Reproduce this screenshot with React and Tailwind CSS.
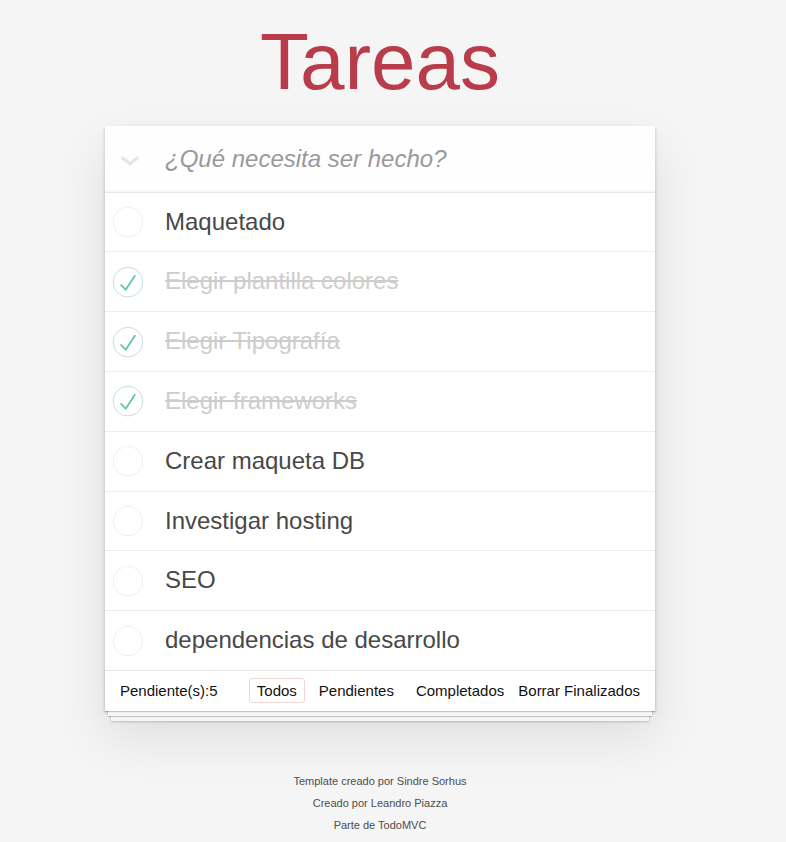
import { useState } from "react";

const initialTodos = [
  { id: 1, title: "Maquetado", done: false },
  { id: 2, title: "Elegir plantilla colores", done: true },
  { id: 3, title: "Elegir Tipografía", done: true },
  { id: 4, title: "Elegir frameworks", done: true },
  { id: 5, title: "Crear maqueta DB", done: false },
  { id: 6, title: "Investigar hosting", done: false },
  { id: 7, title: "SEO", done: false },
  { id: 8, title: "dependencias de desarrollo", done: false },
];

const filters = ["Todos", "Pendientes", "Completados"];

function TodoItem({ todo, onToggle }) {
  const inputId = `todo-${todo.id}`;
  return (
    <li className="flex items-center border-b border-[#ededed] last:border-b-0">
      <span className="grid h-10 w-10 shrink-0">
        <input
          id={inputId}
          type="checkbox"
          checked={todo.done}
          onChange={() => onToggle(todo.id)}
          className="col-start-1 row-start-1 h-10 w-10 cursor-pointer appearance-none"
        />
        <svg
          viewBox="-10 -18 100 135"
          aria-hidden="true"
          className="pointer-events-none col-start-1 row-start-1 h-10 w-10 overflow-visible"
        >
          <circle cx="50" cy="50" r="50" fill="none" strokeWidth="3" stroke={todo.done ? "#bddad5" : "#ededed"} />
          {todo.done && <path fill="#5dc2af" d="M72 25L42 71 27 56l-4 4 20 20 34-52z" />}
        </svg>
      </span>
      <label
        htmlFor={inputId}
        className={
          todo.done
            ? "flex-1 py-[15px] pr-4 pl-5 text-[24px] leading-[1.2] text-[#cdcdcd] line-through"
            : "flex-1 py-[15px] pr-4 pl-5 text-[24px] leading-[1.2] text-[#484848]"
        }
      >
        {todo.title}
      </label>
    </li>
  );
}

export default function App() {
  const [todos, setTodos] = useState(initialTodos);
  const [filter, setFilter] = useState("Todos");
  const [draft, setDraft] = useState("");

  const pending = todos.filter((t) => !t.done).length;
  const visible = todos.filter(
    (t) => filter === "Todos" || (filter === "Completados" ? t.done : !t.done)
  );

  const toggle = (id) => setTodos(todos.map((t) => (t.id === id ? { ...t, done: !t.done } : t)));
  const toggleAll = () => setTodos(todos.map((t) => ({ ...t, done: pending > 0 })));
  const addTodo = (e) => {
    e.preventDefault();
    if (!draft.trim()) return;
    setTodos([...todos, { id: Date.now(), title: draft.trim(), done: false }]);
    setDraft("");
  };

  return (
    <div className="min-h-screen bg-[#f5f5f5] pr-[26px] font-['Liberation_Sans',Arial,sans-serif] text-[#4d4d4d]">
      <div className="mx-auto max-w-[550px]">
        <h1 className="pt-4 pb-[18px] text-center text-[80px] leading-[92px] text-[#b83c4a]">Tareas</h1>

        <main className="bg-white shadow-[0_2px_4px_0_rgba(0,0,0,0.2),0_25px_50px_0_rgba(0,0,0,0.1)]">
          <form
            onSubmit={addTodo}
            className="flex items-center bg-[#fefefe] shadow-[inset_0_-2px_1px_rgba(0,0,0,0.03)]"
          >
            <button
              type="button"
              onClick={toggleAll}
              aria-label="Marcar todas"
              className="flex w-[50px] shrink-0 cursor-pointer justify-center pt-1"
            >
              <svg width="18" height="12" viewBox="0 0 18 12" aria-hidden="true">
                <path fill="#e6e6e6" d="M.5 1C3.500 2.200 6.500 4.200 9 6.800 11.500 4.200 14.500 2.200 17.500 1V4.800C14.300 6.400 11.500 8.600 9 11.500 6.500 8.600 3.700 6.400.5 4.800z" />
              </svg>
            </button>
            <input
              type="text"
              aria-label="Nueva tarea"
              placeholder="¿Qué necesita ser hecho?"
              value={draft}
              onChange={(e) => setDraft(e.target.value)}
              className="min-w-0 flex-1 bg-transparent py-4 pr-4 pl-[10px] text-[24px] leading-[1.4] outline-none placeholder:text-[#999] placeholder:italic"
            />
          </form>

          <ul className="border-t border-[#e6e6e6]">
            {visible.map((todo) => (
              <TodoItem key={todo.id} todo={todo} onToggle={toggle} />
            ))}
          </ul>

          <footer className="flex flex-wrap items-center gap-x-1.5 border-t border-[#e6e6e6] px-[15px] pt-[7px] pb-2 text-[15px] leading-[17px] text-[#111] shadow-[0_1px_1px_rgba(0,0,0,0.2),0_8px_0_-3px_#f6f6f6,0_9px_1px_-3px_rgba(0,0,0,0.2),0_16px_0_-6px_#f6f6f6,0_17px_2px_-6px_rgba(0,0,0,0.2)]">
            <span className="mr-auto">Pendiente(s):{pending}</span>
            <nav className="flex gap-1.5">
              {filters.map((name) => (
                <a
                  key={name}
                  href="#"
                  onClick={(e) => {
                    e.preventDefault();
                    setFilter(name);
                  }}
                  className={
                    filter === name
                      ? "rounded-[3px] border border-[#efd5d5] px-[7px] py-[3px]"
                      : "rounded-[3px] border border-transparent px-[7px] py-[3px]"
                  }
                >
                  {name}
                </a>
              ))}
            </nav>
            <button
              type="button"
              onClick={() => setTodos(todos.filter((t) => !t.done))}
              className="cursor-pointer"
            >
              Borrar Finalizados
            </button>
          </footer>
        </main>

        <footer className="mt-[65px] flex flex-col gap-[11px] pb-3 text-center text-[11px] leading-[11px]">
          <p>Template creado por Sindre Sorhus</p>
          <p>Creado por Leandro Piazza</p>
          <p>Parte de TodoMVC</p>
        </footer>
      </div>
    </div>
  );
}
